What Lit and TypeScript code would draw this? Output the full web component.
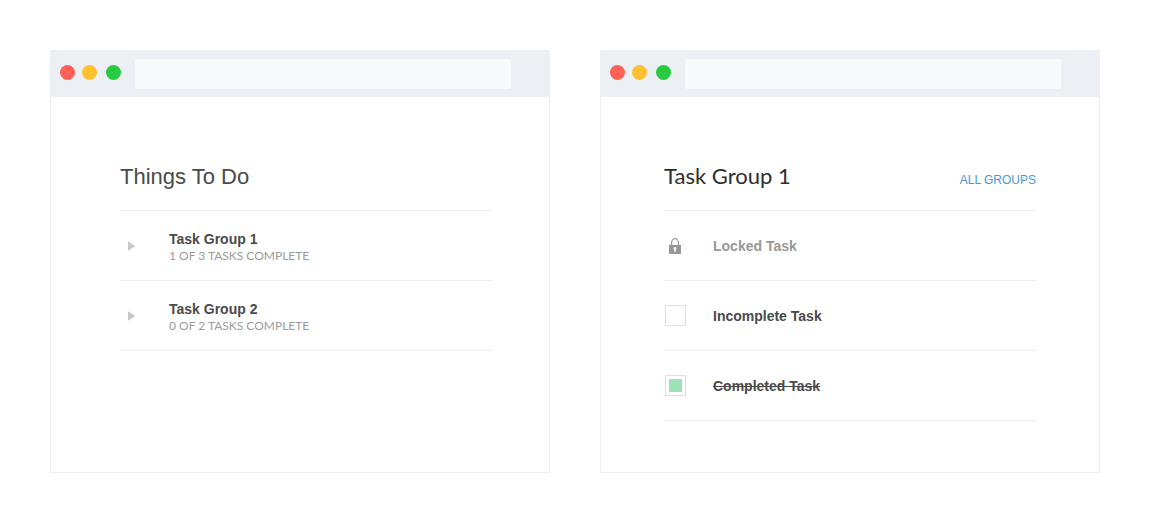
import { LitElement, html, css, svg } from "lit";
import { customElement, property } from "lit/decorators.js";

const base = css`
  :host { display: block; font-family: "Liberation Sans", Arial, sans-serif; color: #4a4a4a; }
  * { box-sizing: border-box; }
`;

const listStyles = css`
  .head {
    display: flex;
    align-items: baseline;
    justify-content: space-between;
    height: 50px;
    padding-top: 2px;
    border-bottom: 1px solid #ececec;
  }
  h1 { margin: 0; font-size: 22px; line-height: 28px; font-weight: 400; }
  ul { margin: 0; padding: 0; list-style: none; }
  li { height: 70px; border-bottom: 1px solid #ececec; }
  .name { font-size: 14px; line-height: 16px; font-weight: 700; }
`;

@customElement("browser-window")
export class BrowserWindow extends LitElement {
  static styles = [
    base,
    css`
      .frame { height: 100%; border: 1px solid #eceff4; background: #fff; }
      .bar {
        display: flex;
        align-items: center;
        height: 46px;
        padding: 0 38px 0 9px;
        background: #eceff4;
      }
      .dots { display: flex; gap: 7px; padding-right: 14px; padding-bottom: 3px; }
      .dot { width: 15px; height: 15px; border-radius: 50%; }
      .red { background: #ff6057; }
      .yellow { background: #ffc130; margin-right: 2px; }
      .green { background: #27ca40; }
      .address {
        flex: 1;
        min-width: 0;
        height: 30px;
        margin-bottom: 1px;
        padding: 0 10px;
        border: 0;
        border-radius: 2px;
        background: #f7f9fb;
        font: inherit;
      }
    `,
  ];

  render() {
    return html`
      <section class="frame">
        <div class="bar">
          <div class="dots">
            <span class="dot red"></span>
            <span class="dot yellow"></span>
            <span class="dot green"></span>
          </div>
          <input class="address" type="text" aria-label="Address" />
        </div>
        <slot></slot>
      </section>
    `;
  }
}

interface Group {
  name: string;
  done: number;
  total: number;
}

@customElement("group-list")
export class GroupList extends LitElement {
  @property({ attribute: false }) groups: Group[] = [];

  static styles = [
    base,
    listStyles,
    css`
      :host { padding: 64px 57px 0 69px; }
      .group {
        display: flex;
        align-items: center;
        width: 100%;
        height: 100%;
        padding: 3px 0 0 8px;
        border: 0;
        background: none;
        color: inherit;
        font: inherit;
        text-align: left;
        cursor: pointer;
      }
      .arrow { width: 8px; height: 10px; margin: 0 33px 2px 0; fill: #c8c8c8; }
      .name, .count { display: block; }
      .count {
        margin-top: 1px;
        font-family: Lato, sans-serif;
        font-size: 12px;
        line-height: 16px;
        color: #9b9b9b;
        text-transform: uppercase;
      }
    `,
  ];

  render() {
    return html`
      <div class="head"><h1>Things To Do</h1></div>
      <ul>
        ${this.groups.map(
          (g) => html`
            <li>
              <button class="group" type="button">
                <svg class="arrow" viewBox="0 0 8 10" aria-hidden="true"><path d="M0 0.3 7.5 5 0 9.7Z" /></svg>
                <span>
                  <span class="name">${g.name}</span>
                  <span class="count">${g.done} of ${g.total} tasks complete</span>
                </span>
              </button>
            </li>
          `
        )}
      </ul>
    `;
  }
}

interface Task {
  name: string;
  state: "locked" | "open" | "done";
}

const lock = svg`
  <path d="M2.6 8V4.6a3.4 3.9 0 0 1 6.8 0V8" fill="none" stroke="#9b9b9b" stroke-width="1.3" />
  <rect x="0" y="7" width="12" height="9" fill="#979797" />
  <path d="M6 9a1.5 1.5 0 0 1 .7 2.8V14H5.3v-2.2A1.5 1.5 0 0 1 6 9Z" fill="#fff" />
`;

@customElement("task-list")
export class TaskList extends LitElement {
  @property() heading = "";
  @property({ attribute: false }) tasks: Task[] = [];

  static styles = [
    base,
    listStyles,
    css`
      :host { padding: 64px 63px 0 63px; }
      .head { padding-top: 1px; }
      h1 { font-family: Lato, sans-serif; color: #2e2e2e; }
      .all {
        font-size: 12px;
        line-height: 16px;
        color: #4a98d0;
        text-decoration: none;
        text-transform: uppercase;
      }
      .task { display: flex; align-items: center; height: 100%; padding-left: 1px; }
      .icon { display: flex; flex: none; width: 48px; }
      .lock { width: 12px; height: 16px; margin: 0 4px; }
      .box {
        appearance: none;
        width: 21px;
        height: 21px;
        margin: 0;
        padding: 3px;
        border: 1px solid #dfdfdf;
        background: #fff;
      }
      .box:checked { background: #9de2b7 content-box; }
      .locked { color: #979797; }
      .done .name { text-decoration: line-through; }
    `,
  ];

  render() {
    return html`
      <div class="head">
        <h1>${this.heading}</h1>
        <a class="all" href="#groups">All Groups</a>
      </div>
      <ul>
        ${this.tasks.map(
          (t) => html`
            <li>
              ${t.state === "locked"
                ? html`<div class="task locked">
                    <span class="icon"><svg class="lock" viewBox="0 0 12 16" aria-hidden="true">${lock}</svg></span>
                    <span class="name">${t.name}</span>
                  </div>`
                : html`<label class="task ${t.state}">
                    <span class="icon"><input class="box" type="checkbox" .checked=${t.state === "done"} /></span>
                    <span class="name">${t.name}</span>
                  </label>`}
            </li>
          `
        )}
      </ul>
    `;
  }
}

@customElement("app-root")
export class AppRoot extends LitElement {
  static styles = [
    base,
    css`
      .page {
        display: grid;
        grid-template-columns: repeat(auto-fit, minmax(400px, 1fr));
        grid-auto-rows: minmax(423px, auto);
        gap: 50px;
        padding: 50px;
      }
    `,
  ];

  private groups: Group[] = [
    { name: "Task Group 1", done: 1, total: 3 },
    { name: "Task Group 2", done: 0, total: 2 },
  ];

  private tasks: Task[] = [
    { name: "Locked Task", state: "locked" },
    { name: "Incomplete Task", state: "open" },
    { name: "Completed Task", state: "done" },
  ];

  render() {
    return html`
      <main class="page">
        <browser-window><group-list .groups=${this.groups}></group-list></browser-window>
        <browser-window><task-list heading="Task Group 1" .tasks=${this.tasks}></task-list></browser-window>
      </main>
    `;
  }
}
